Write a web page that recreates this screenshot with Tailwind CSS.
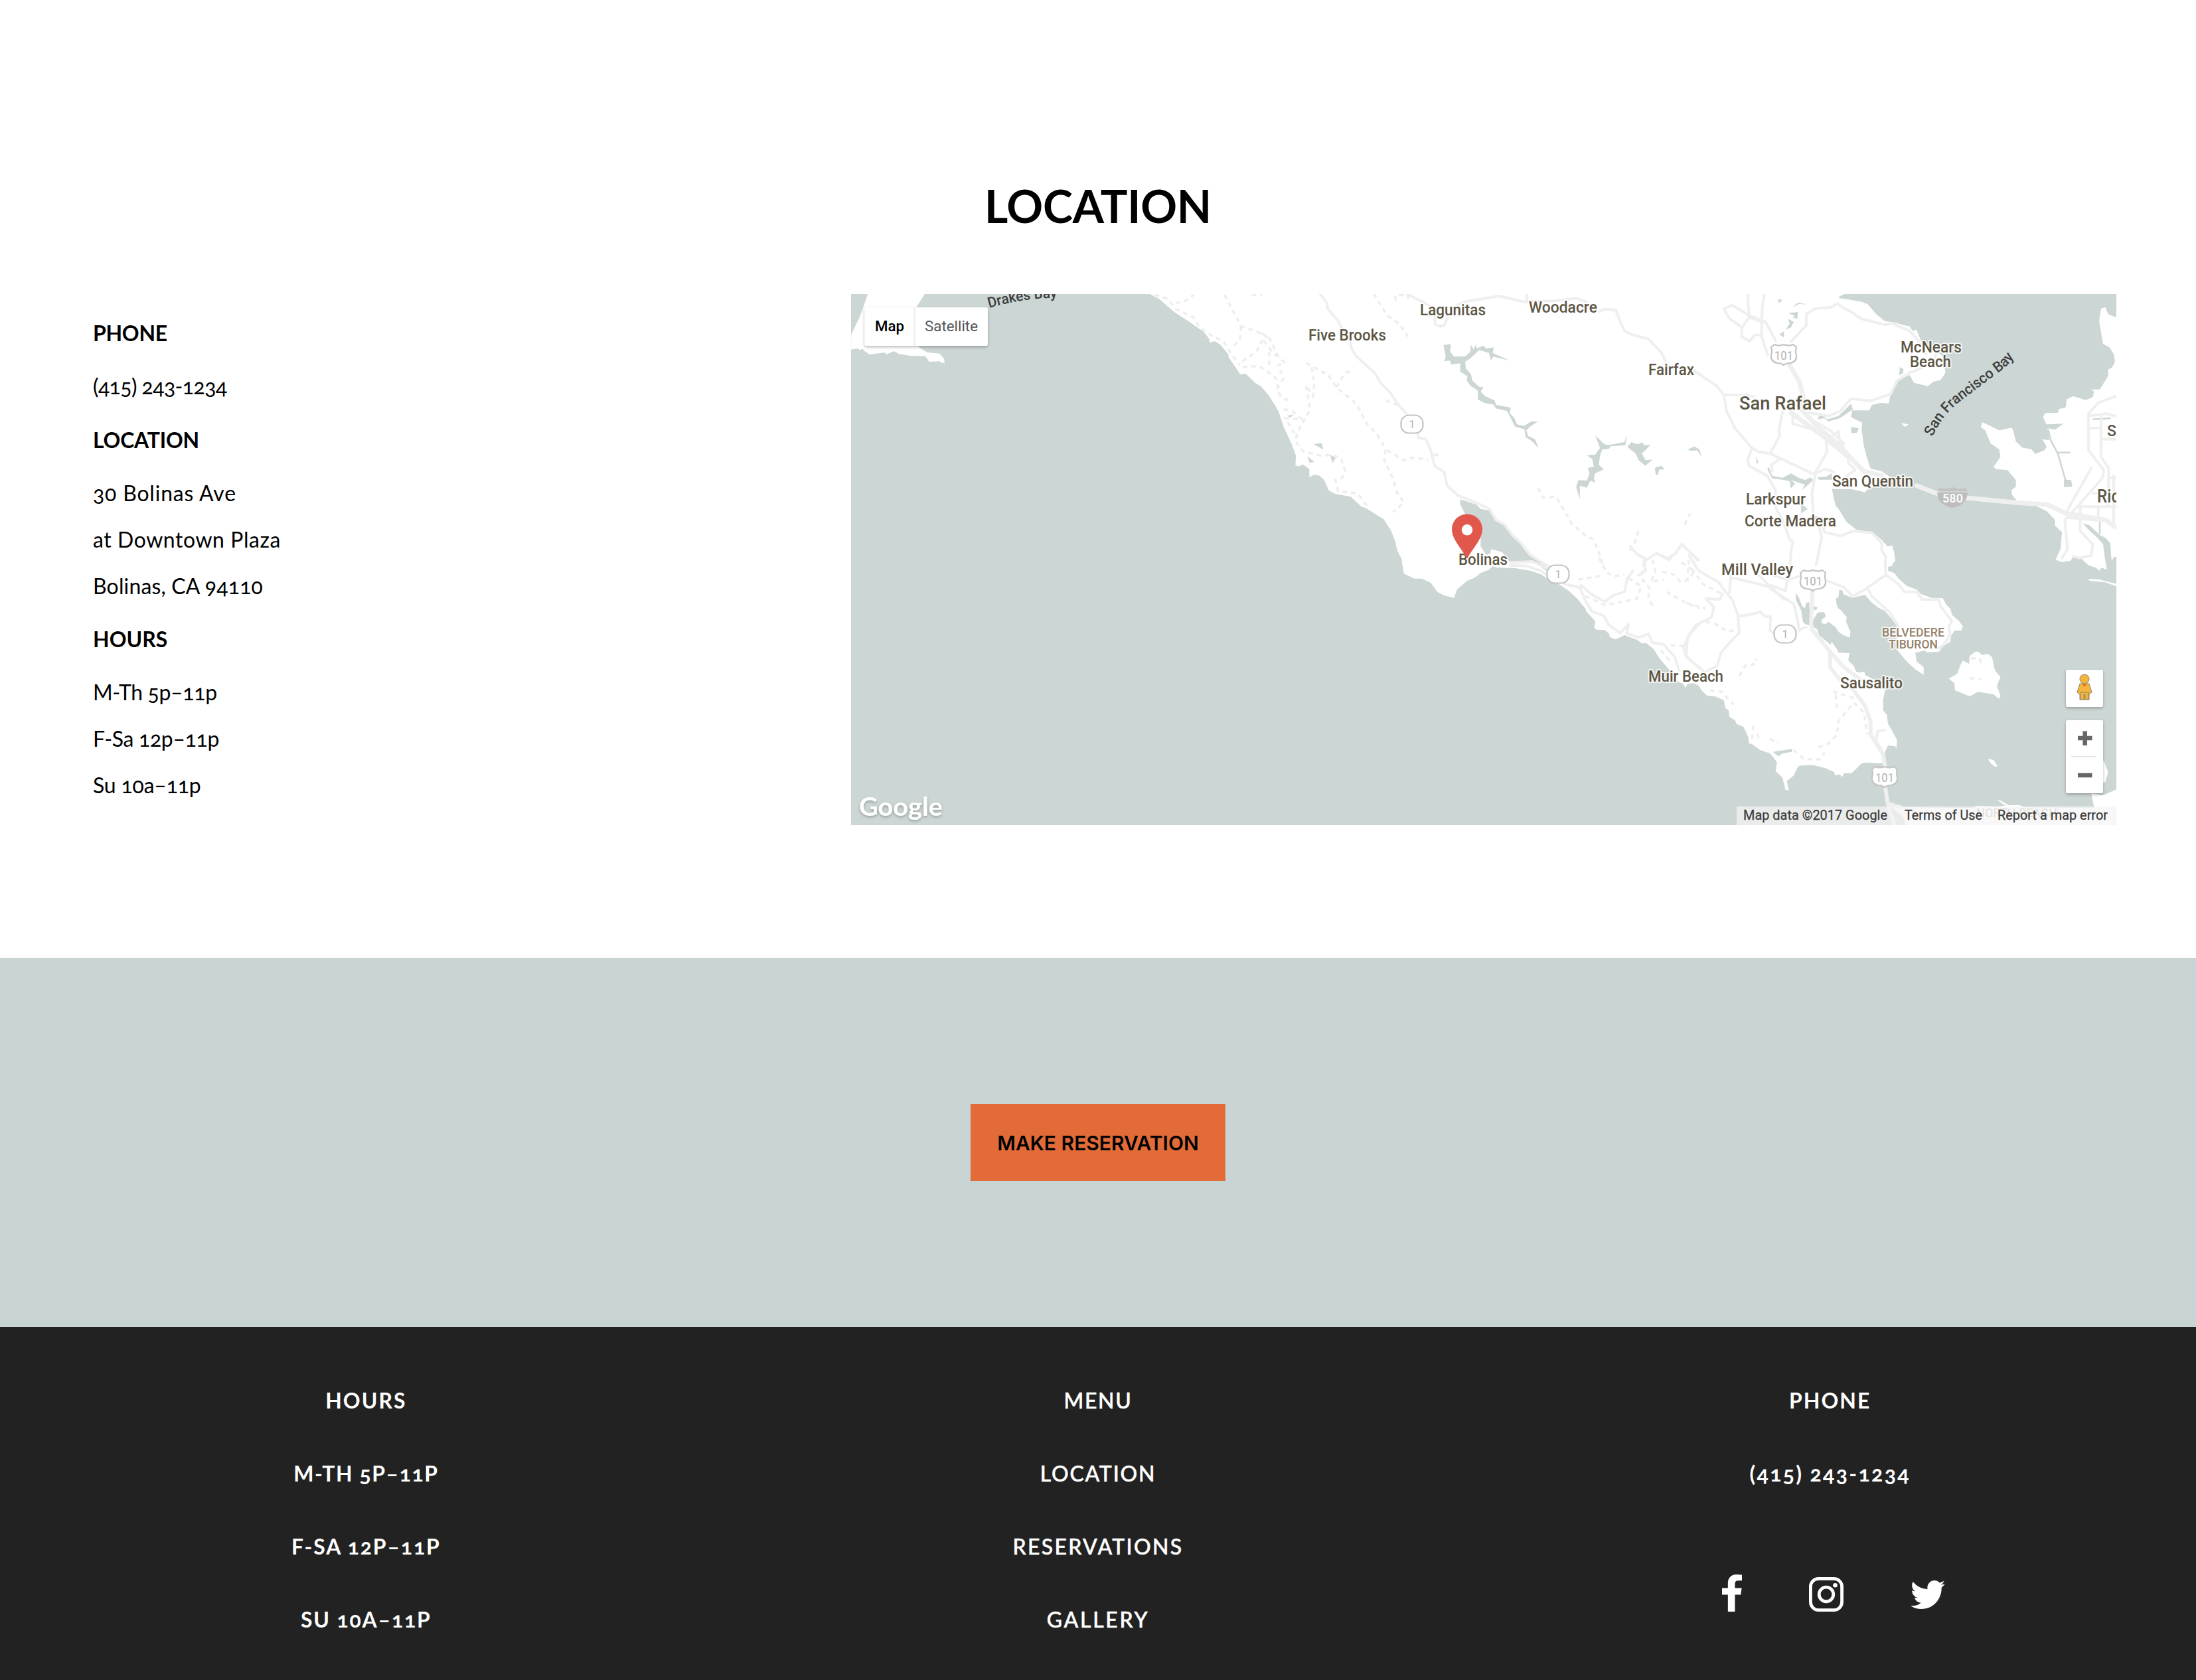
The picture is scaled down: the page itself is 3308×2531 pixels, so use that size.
<!DOCTYPE html>
<html lang="en">
<head>
<meta charset="utf-8">
<title>Location</title>
<script src="https://cdn.jsdelivr.net/npm/@tailwindcss/browser@4"></script>
</head>
<body class="w-[3308px] h-[2531px] overflow-hidden bg-white text-black font-['Lato',sans-serif]">
<main>
  <section class="h-[1443px] pt-[270px]">
    <h2 class="text-center text-[68px] leading-[80px] font-bold tracking-[-0.3px]">LOCATION</h2>
    <div class="mt-[93px] flex h-[800px] pl-[140px] pr-[120px]">
      <div class="w-[1142px] shrink-0 pt-[24px] text-[32px] leading-[70px] [font-feature-settings:'onum']">
        <p class="font-bold mb-[10px] tracking-[-0.3px]">PHONE</p>
        <p class="mb-[10.500px] tracking-[-0.6px]">(415) 243-1234</p>
        <p class="font-bold mb-[10px] tracking-[-0.25px]">LOCATION</p>
        <p class="mb-[10.500px]"><span class="tracking-[0.8px]">30 Bolinas Ave</span><br><span class="tracking-[0.55px]">at Downtown Plaza</span><br><span class="tracking-[0.15px]">Bolinas, CA 94110</span></p>
        <p class="font-bold mb-[10px]">HOURS</p>
        <p class="tracking-[-0.35px]">M-Th 5p–11p<br>F-Sa 12p–11p<br><span class="tracking-[-0.2px]">Su 10a–11p</span></p>
      </div>
      <svg class="block shrink-0 w-[1906px] h-[800px] overflow-hidden" viewBox="0 0 1906 800" fill="none" font-family="Roboto, sans-serif">
        <defs>
          <g id="us">
            <path d="M-19-11 L-14-15 Q-8-12 0-15 Q8-12 14-15 L19-11 Q17-5 19 1 Q20 11 10 13 Q4 13 0 16 Q-4 13-10 13 Q-20 11-19 1 Q-17-5-19-11Z" fill="#fff" stroke="#c4c4c4" stroke-width="2.2"/>
            <text x="-14" y="8" font-size="19" fill="#b2b2b2" textLength="28" lengthAdjust="spacingAndGlyphs">101</text>
          </g>
          <g id="ca">
            <rect x="-16.500" y="-13.500" width="33" height="27" rx="12" fill="#fff" stroke="#c4c4c4" stroke-width="2.200"/>
            <text x="0" y="6" font-size="17" fill="#b2b2b2" text-anchor="middle">1</text>
          </g>
          <filter id="sh" x="-20%" y="-20%" width="140%" height="150%"><feDropShadow dx="0" dy="2" stdDeviation="2" flood-opacity="0.28"/></filter>
        </defs>
        <rect width="1906" height="800" fill="#ccd6d4"/>

        <!-- Land -->
        <g fill="#fff">
          <g transform="translate(-12 -13) scale(.4209 .33333)">
            <path d="M91 30 76 85 60 140 29 222 29 290 50 285 62 292 68 286 80 300 95 312 150 303 155 312 182 297 200 310 240 318 295 320 308 345 345 343 352 350 364 350 360 328 345 308 300 302 270 278 262 100 296 30Z"/>
            <path d="M1085 30 1130 60 1185 120 1240 165 1290 210 1310 240 1312 258 1330 252 1350 268 1378 310 1380 325 1422 403 1440 398 1475 440 1498 458 1525 500 1560 570 1590 600 1590 30Z"/>
          </g>
          <path transform="translate(618 -13) scale(.4209 .33333)" d="M-5 30V450L0 458 25 490 62 570 80 640 108 715 124 770 122 812 133 818 150 810 172 830 172 866 190 855 208 860 225 880 242 928 265 942 320 955 358 1000 375 1007 438 1057 465 1110 480 1160 487 1200 502 1235 505 1270 1600 1270V30Z"/>
          <path transform="translate(618 397) scale(.4209 .33333)" d="M502 -10 510 72 548 95 575 95 607 115 630 155 655 172 690 182 700 145 737 105 765 90 785 70 815 55 828 38 840 45 905 47 965 60 1000 75 1025 95 1065 120 1100 150 1130 185 1160 230 1163 243 1175 260 1195 287 1192 318 1200 326 1230 328 1245 345 1247 360 1268 370 1300 350 1345 372 1362 388 1378 387 1405 415 1425 455 1445 485 1465 515 1490 560 1512 572 1518 590 1525 570 1545 565 1560 575 1580 590V-10Z"/>
          <path transform="translate(1258 397) scale(.4209 .33333)" d="M-10 -10V575L0 572 20 568 42 572 55 600 75 625 105 628 135 645 140 680 152 690 155 720 175 735 180 752 205 765 222 810 225 840 235 842 265 870 300 885 325 925 320 965 345 995 355 1050 368 1052 360 1010 385 985 400 945 410 940 455 938 495 950 530 970 532 985 550 980 558 992 565 975 592 975 628 930 640 927 700 930 712 935 708 890 722 850 748 852 752 865 755 825 738 785 722 750 718 710 705 690 705 640 712 600 700 570 640 530 638 515 620 520 608 515 600 490 580 465 585 432 545 430 538 410 520 380 518 395 475 350 470 325 450 310 425 300 418 290 412 240 392 190 392 160 403 180 415 220 425 228 430 205 440 200 442 240 452 290 460 270 470 250 490 245 498 255 498 270 485 280 485 298 500 300 510 290 535 315 545 335 562 350 585 362 588 335 572 290 575 270 555 240 540 220 535 185 545 180 548 145 560 150 562 165 595 182 640 168 665 205 690 228 710 240 735 275 760 320 750 410 760 425 790 470 820 505 850 530 850 495 825 470 820 430 855 420 860 428 905 425 920 400 945 380 948 355 960 330 985 330 990 310 975 285 952 260 945 230 932 215 918 183 880 182 840 165 825 145 790 128 760 95 745 70 723 60 722 45 748 15 745 -10Z"/>
          <g transform="translate(1258 -13) scale(.4209 .33333)">
            <path d="M-10 30V1270H735L748 1240 745 1210 738 1175 720 1180 700 1150 665 1115 610 1105 575 1070 545 1010 535 995 528 960 522 920 590 920 640 935 650 920 730 885 740 875 700 840 660 828 645 770 635 720 628 650 630 620 590 595 595 565 655 565 665 540 700 530 725 535 730 500 745 450 760 425 800 405 815 440 865 455 885 435 910 428 928 395 925 365 925 330 890 290 845 260 830 220 825 200 810 205 800 185 775 178 740 165 712 162 680 130 650 85 630 75 590 65 550 58 545 52 568 38 568 30Z"/>
            <path d="M1600 148 1539 145 1510 130 1500 98 1485 105 1478 160 1492 265 1515 280 1530 310 1535 345 1525 370 1510 380 1510 410 1480 470 1450 470 1460 480 1455 505 1430 518 1385 500 1362 515 1358 552 1335 558 1330 575 1285 577 1277 595 1290 630 1300 700 1275 695 1290 730 1282 745 1250 762 1235 740 1210 735 1180 705 1170 655 1165 643 1120 655 1060 618 1054 640 1070 655 1090 715 1120 740 1125 775 1100 820 1110 830 1150 835 1180 880 1180 910 1165 925 1165 945 1185 975 1250 995 1290 1020 1320 1060 1320 1085 1345 1115 1340 1190 1322 1240 1345 1250 1375 1245 1385 1228 1410 1230 1440 1265 1465 1275 1480 1290 1485 1275 1505 1285 1500 1235 1528 1238 1528 1228 1600 1228Z"/>
            <path d="M768 622 797 628 783 640Z"/>
          </g>
          <g transform="translate(1258 397) scale(.4209 .33333)">
            <path d="M1045 425 1035 425 1015 445 1012 480 990 465 980 490 970 525 940 548 960 568 962 600 1015 627 1045 607 1100 618 1120 638 1125 625 1112 580 1125 540 1105 510 1095 450 1080 435 1060 440Z"/>
            <path d="M1080 908 1100 915 1115 943 1105 945 1090 930ZM1480 900 1495 920 1510 970 1500 1015 1480 1020ZM1437 97 1475 98 1545 120V132L1500 112 1445 105ZM720 1110 755 1128 1030 1132 1040 1122 1110 1125 1150 1120 1190 1118 1220 1130 1539 1130V1220H790L775 1170ZM1450 1065 1490 1075 1500 1070 1545 1045V1130H1460ZM1112 1095 1125 1098 1155 1120 1140 1120Z"/>
          </g>
        </g>

        <!-- Lagoons, lakes and creeks -->
        <g fill="#ccd6d4">
          <g transform="translate(618 -13) scale(.4209 .33333)">
            <path d="M712 967 745 980 770 990 785 1010 818 1018 835 1060 868 1082 895 1130 925 1165 960 1215 1010 1250 1050 1288 1020 1290 985 1258 955 1245 890 1250 870 1218 862 1205 822 1192 820 1212 805 1218 785 1180 785 1120 730 1035 712 990Z"/>
            <path d="M652 270 678 265 676 300 690 322 730 320 748 300 750 268 760 290 768 265 770 285 795 272 805 285 832 280 828 305 890 340 830 322 822 340 815 305 780 292 750 328 730 345 732 375 750 400 755 430 780 458 795 460 785 480 800 500 835 520 840 540 892 552 890 580 905 598 915 628 940 635 965 615 990 615 965 635 948 655 955 680 980 695 993 738 970 705 945 685 942 650 908 638 880 568 840 556 830 538 800 532 775 515 775 475 750 455 735 430 738 410 712 390 712 352 680 358 675 340 655 343 660 320Z"/>
            <path d="M1195 678 1225 715 1240 722 1300 708 1308 672 1303 722 1250 727 1245 738 1220 742 1212 770 1208 810 1225 832 1195 850 1190 870 1195 893 1178 882 1165 914 1140 905 1140 965 1127 910 1135 880 1165 882 1175 850 1168 825 1190 820 1185 785 1165 768 1195 765 1212 735ZM1325 708 1345 718 1365 710 1370 722 1392 720 1375 745 1362 760 1375 790 1400 787 1375 815 1350 790 1340 760 1310 730ZM1408 825 1432 815 1443 832 1425 832 1418 858 1412 855ZM1525 742 1550 728 1568 740 1576 775 1560 745 1540 748ZM188 718 215 712 222 742ZM165 772 190 798 172 802ZM246 765 266 780 255 802ZM92 590 115 582 105 598Z"/>
          </g>
          <g transform="translate(1258 -13) scale(.4209 .33333)">
            <path d="M765 368 778 380 775 398 762 405ZM590 640 617 645 612 665 592 668ZM328 62 345 65 332 80ZM380 98 400 78 435 86 405 84ZM365 125 400 120 398 150 380 145 390 138ZM365 150 385 165 375 190 355 200 370 175ZM333 222 350 208 350 235ZM480 580 505 605 545 590 590 535 597 560 550 600 508 615 495 600 470 605ZM295 820 308 860 345 870 375 850 400 868 425 880 445 868 455 880 415 925 425 900 375 880 390 895 375 918 370 885 345 878 308 872 290 830ZM470 868 500 865 520 850 525 878 475 878ZM250 770 258 800 252 808ZM1290 628 1350 625 1320 652 1290 645ZM1352 878 1378 880 1382 910 1352 912ZM1180 705 1205 735 1215 728 1195 715ZM410 985 435 1010 412 1030ZM450 1040 490 1048 460 1060Z"/>
            <path d="M1420 1075 1445 1085 1480 1128 1500 1140 1518 1165 1522 1245 1500 1245 1492 1170 1470 1138 1440 1105Z"/>
          </g>
          <path transform="translate(1258 397) scale(.4209 .33333)" d="M310 878 380 865 378 878 345 885 330 898ZM458 220 470 225 465 238 456 235ZM540 205 556 205 562 230 545 232Z"/>
        </g>
        <g stroke="#ccd6d4" stroke-width="2.500">
          <path transform="translate(1258 -13) scale(.4209 .33333)" vector-effect="non-scaling-stroke" d="M1295 650 1305 700 1330 760 1360 890M1325 755H1375M1455 605 1520 600M1480 1065V1125"/>
        </g>

        <!-- Roads -->
        <g stroke="#efefef" stroke-width="4" stroke-linejoin="round" stroke-linecap="round">
          <g transform="translate(618 -13) scale(.4209 .33333)">
            <path vector-effect="non-scaling-stroke" d="M210 38 235 80 237 105 275 160 290 200 310 230 325 290 340 320 405 395 430 445 465 490 490 540 520 580M560 665 562 688 588 695 605 740 620 815 655 845 665 905 705 950 775 985 818 1012 840 1060 870 1080 900 1130 930 1165 960 1215 1020 1265 1060 1290"/>
            <path vector-effect="non-scaling-stroke" d="M520 38 580 75 600 92M700 88 735 72 850 48 920 68 950 76V42M950 72 1050 70 1130 58 1165 76M1210 118 1225 107 1268 110 1285 165 1300 205 1325 222 1385 242 1430 300 1450 350M1550 385 1580 410M620 135 622 175 640 186 655 180 665 150M1505 1170 1480 1215 1450 1235 1415 1210 1380 1240 1345 1215 1320 1180M1505 1170 1530 1200 1560 1240M610 770 630 765"/>
          </g>
          <g transform="translate(618 397) scale(.4209 .33333)">
            <path vector-effect="non-scaling-stroke" d="M890 35 950 38 1000 60 1025 80M890 22 970 18 1025 50M1085 120 1140 135 1160 195 1185 245 1225 262 1245 305 1285 342 1315 302 1308 342 1350 362 1385 345 1400 385 1440 392 1480 450 1495 510M1568 300 1535 345 1510 405 1520 445 1568 500M1145 125 1180 165 1230 200 1260 170 1300 155 1310 95 1330 60M1350 80 1375 60 1370 0M1470 -10 1460 10 1435 -10"/>
          </g>
          <g transform="translate(1258 -13) scale(.4209 .33333)">
            <path vector-effect="non-scaling-stroke" d="M220 38 225 145 285 170M135 105 165 90 225 135 285 165 320 250M135 105 155 150 200 190 225 145M200 190 198 232 228 252 245 225 270 222M280 38 272 100 270 230 292 315M375 255 430 180 430 130 460 105 520 98 542 82 560 100 585 115 625 150 712 178 740 172 770 190 800 205 828 245 850 275 858 310M858 365 800 395 755 430 732 490 660 522 590 512 550 570 510 590 440 575M30 388 110 455 135 495 205 495 240 502M135 495 145 570 175 645 235 735 260 752 300 760 455 852 500 830 530 845M345 570 332 655 335 680 300 760M235 735 220 790 225 815 290 860 320 925 322 1010 345 1060 360 1110 370 1150 382 1160 375 1205 372 1262M380 565 382 625 450 650 500 690 505 750 465 840 450 935 455 1040M470 1060 485 1140 465 1262M490 1090 495 1115 550 1132 600 1110 665 1118 700 1165 700 1200 715 1225 712 1262M330 790 305 810 308 840M500 700 545 660 550 720 515 715M545 690 580 780 580 800 605 835 570 865M430 590 520 660 565 715M0 1190 45 1240M900 290 890 330"/>
            <path vector-effect="non-scaling-stroke" stroke-width="7" d="M370 360 405 435 420 510 415 560M375 575 500 690 580 775M415 565 480 650 545 720 635 840 700 860M825 905 900 942M1005 960 1180 982 1290 990 1360 1030 1500 1060 1535 1090"/>
            <path vector-effect="non-scaling-stroke" d="M1560 490 1475 530 1440 580 1440 745 1495 835 1490 870 1400 1000 1355 1060 1365 1190 1345 1232M1485 590V775L1512 825V1000M1440 645H1485M1485 695H1539M1440 590 1505 580 1539 592M1450 825 1360 1025M1410 1000V1110L1455 1170 1450 1220 1410 1232 1385 1225M1410 1000H1539M1370 1050 1500 1065 1535 1095M1455 940H1500M1512 870H1539M1475 1005V1060M1530 860V1070"/>
          </g>
          <g transform="translate(1258 397) scale(.4209 .33333)">
            <path vector-effect="non-scaling-stroke" d="M10 -10 45 60 115 110 150 170 165 190 185 260 190 340 155 385 125 430 110 490 70 515M70 185 100 225 90 270 35 305 5 360 0 450 60 510M70 185 120 190 130 165M190 265 240 255 265 245 280 265 302 268 300 330 318 345M160 85 155 160M160 90 230 110 290 130 385 210 400 290 405 330M260 80 300 130 350 190M300 125 355 150 362 100M310 80 362 100 405 85M405 325 430 315M505 105 565 135 595 175 645 140 715 78 712 10M715 78 760 120 780 155 825 155 845 190 905 190 910 220 950 285 940 315 945 345 925 390 905 410M650 140 665 175 730 250 760 310M710 780 685 785 680 830 700 870"/>
            <path vector-effect="non-scaling-stroke" stroke-width="6" d="M452 148 447 300 450 325 515 425 560 490 600 530 630 555M515 425 515 495 545 545 600 600 640 670 660 740 660 800 705 890 712 945M712 1035 722 1115 745 1210M730 1115 770 1130"/>
          </g>
        </g>

        <!-- Trails -->
        <g stroke="#eeeeee" stroke-width="3.500" stroke-dasharray="7 6">
          <g transform="translate(-12 -13) scale(.4209 .33333)">
            <path vector-effect="non-scaling-stroke" d="M1365 42 1425 185 1475 205 1520 235M1425 185 1420 250 1390 280M1115 42 1160 60 1190 105 1255 145 1275 190 1330 235 1360 250 1395 320 1420 360M1190 80 1225 70 1255 42M1500 245 1480 300 1425 345M1430 368 1490 365 1520 390 1550 420 1560 490M1505 250 1545 315 1568 320M1525 300 1525 360M1462 42H1500"/>
          </g>
          <g transform="translate(618 -13) scale(.4209 .33333)">
            <path vector-effect="non-scaling-stroke" d="M402 38 450 135 495 175 525 232M480 68 480 45 525 42 525 65M0 215 30 240 60 320 85 350 60 360 80 420 55 470 75 510 105 520M160 350 240 405 268 460 340 535 380 630 410 665 445 740 440 790 470 870 485 935 510 980 472 1025M180 370 190 440 185 500 160 450 175 560 135 650 120 700 150 750 215 770 250 765 285 780 300 840 290 870 265 880 275 930 345 940 380 1000M268 460 300 395 332 385M450 745 510 790 540 778 598 788M80 560 110 565 145 605 85 600 130 690M445 520 485 540M990 915 1010 960 1055 955 1110 1075 1160 1130 1190 1150 1210 1215 1222 1262M1350 1110 1335 1170 1310 1215M1515 1080 1535 1030"/>
          </g>
          <g transform="translate(618 397) scale(.4209 .33333)">
            <path vector-effect="non-scaling-stroke" d="M1208 0 1235 65 1260 85 1300 78M1135 100 1225 80M1160 175 1230 215 1310 195 1345 185 1360 130 1310 90M1370 20 1360 90 1390 140 1385 180 1400 218M1400 10 1410 60 1395 110 1440 100M1435 65 1475 75 1500 110 1530 100 1550 60 1500 20M1450 155 1520 205 1568 230M1465 395 1510 400M1430 420 1470 480M1530 10 1525 100"/>
          </g>
          <g transform="translate(1258 397) scale(.4209 .33333)">
            <path vector-effect="non-scaling-stroke" d="M0 205 70 230M20 50 60 120 130 165M70 290 105 300 150 335 185 325M190 535 210 490 250 480 250 455M85 600 125 605 170 665M240 760 235 835M255 795 260 820M300 820 330 840M525 605 600 635M535 620 540 690M600 655 635 700 650 800M590 670 545 740 540 800 510 840 470 860M385 870 420 910 480 912 495 880M1020 455 1050 455 1060 495M1015 545 1055 550"/>
          </g>
        </g>

        <!-- Route shields -->
        <use href="#ca" x="845" y="196"/><use href="#ca" x="1065" y="422"/><use href="#ca" x="1407" y="512"/>
        <use href="#us" x="1405" y="91"/><use href="#us" x="1449" y="431"/><use href="#us" x="1557" y="727"/>
        <g transform="translate(1659 306)">
          <path d="M-20-14Q-10-11 0-15 10-11 20-14L22-9H-22Z" fill="#c2c2c2"/>
          <path d="M-23-7H23Q22 12 0 16-22 12-23-7Z" fill="#bdbdbd"/>
          <text x="-15" y="8" font-size="18" fill="#fff" textLength="31" lengthAdjust="spacingAndGlyphs" font-weight="500">580</text>
        </g>

        <!-- Place labels -->
        <g fill="#5d5645" font-size="23" font-weight="500" stroke="#fff" stroke-opacity="0.75" stroke-width="4" stroke-linejoin="round" paint-order="stroke">
          <text x="857" y="32" textLength="99" lengthAdjust="spacingAndGlyphs">Lagunitas</text>
          <text x="1021" y="28" textLength="103" lengthAdjust="spacingAndGlyphs">Woodacre</text>
          <text x="689" y="70" textLength="117" lengthAdjust="spacingAndGlyphs">Five Brooks</text>
          <text x="1201" y="122" textLength="69" lengthAdjust="spacingAndGlyphs">Fairfax</text>
          <text x="915" y="408" textLength="74" lengthAdjust="spacingAndGlyphs">Bolinas</text>
          <text x="1581" y="88" textLength="92" lengthAdjust="spacingAndGlyphs">McNears</text>
          <text x="1595" y="110" textLength="62" lengthAdjust="spacingAndGlyphs">Beach</text>
          <text x="1338" y="174" font-size="28" textLength="131" lengthAdjust="spacingAndGlyphs">San Rafael</text>
          <text x="1478" y="290" textLength="122" lengthAdjust="spacingAndGlyphs">San Quentin</text>
          <text x="1348" y="317" textLength="90" lengthAdjust="spacingAndGlyphs">Larkspur</text>
          <text x="1346" y="350" textLength="138" lengthAdjust="spacingAndGlyphs">Corte Madera</text>
          <text x="1311" y="423" textLength="108" lengthAdjust="spacingAndGlyphs">Mill Valley</text>
          <text x="1201" y="584" textLength="113" lengthAdjust="spacingAndGlyphs">Muir Beach</text>
          <text x="1490" y="594" textLength="94" lengthAdjust="spacingAndGlyphs">Sausalito</text>
          <text x="1892" y="214">S</text>
          <text x="1877" y="314" font-size="28" textLength="34" lengthAdjust="spacingAndGlyphs">Ric</text>
          <g fill="#958269" font-size="17.500">
            <text x="1553" y="516" textLength="94" lengthAdjust="spacingAndGlyphs">BELVEDERE</text>
            <text x="1563" y="534" textLength="74" lengthAdjust="spacingAndGlyphs">TIBURON</text>
            <text x="1695" y="788" textLength="122" lengthAdjust="spacingAndGlyphs" font-weight="400" fill-opacity="0.7">NORTH BEACH</text>
          </g>
        </g>
        <path id="bay" d="M1629 215Q1642 186 1666 165L1734 114Q1747 104 1759 84"/>
        <path id="drakes" d="M208 21Q258 6 320 5"/>
        <g fill="#3e3e40" font-size="22" font-weight="500">
          <text><textPath href="#bay" textLength="174" lengthAdjust="spacingAndGlyphs">San Francisco Bay</textPath></text>
          <text><textPath href="#drakes" textLength="104" lengthAdjust="spacingAndGlyphs">Drakes Bay</textPath></text>
        </g>

        <!-- Marker -->
        <path d="M928 399C920 383 905 370 905 354A23 22.500 0 0 1 951 354C951 370 936 383 928 399Z" fill="#e2574c"/>
        <circle cx="928" cy="355.300" r="8.300" fill="#fff"/>

        <!-- Map type switch -->
        <rect x="20.500" y="20" width="185.500" height="58" rx="3" fill="#fff" filter="url(#sh)"/>
        <path d="M95.500 20V78" stroke="#ececec" stroke-width="2"/>
        <g font-size="22">
          <text x="36" y="56" fill="#000" font-weight="500" textLength="44" lengthAdjust="spacingAndGlyphs">Map</text>
          <text x="111" y="56" fill="#565656" textLength="80" lengthAdjust="spacingAndGlyphs">Satellite</text>
        </g>

        <!-- Street view and zoom -->
        <rect x="1830" y="566" width="56" height="56" rx="3" fill="#fff" filter="url(#sh)"/>
        <g fill="#f3b53b" stroke="#8d8371" stroke-width="1">
          <path d="M1851 587H1865L1869 600 1865 603V611H1851V603L1847 600Z"/>
          <path d="M1852 600V611H1857V603H1859V611H1864V600Z"/>
          <circle cx="1858" cy="580" r="7"/>
        </g>
        <path d="M1854 587H1862L1858 592Z" fill="#dd7a28"/>
        <rect x="1830" y="642" width="56" height="110" rx="3" fill="#fff" filter="url(#sh)"/>
        <path d="M1838 697H1876" stroke="#e6e6e6" stroke-width="2"/>
        <path d="M1848 669H1869.500M1858.750 658.500V680M1848 725H1869.500" stroke="#666" stroke-width="6.500"/>

        <!-- Attribution -->
        <rect x="1334" y="772" width="572" height="28" fill="#f5f5f5" fill-opacity="0.7"/>
        <g font-size="20.500" fill="#3c3c3c" stroke="#3c3c3c" stroke-width="0.3">
          <text x="1344" y="792" textLength="217" lengthAdjust="spacingAndGlyphs">Map data ©2017 Google</text>
          <text x="1587" y="792" textLength="117" lengthAdjust="spacingAndGlyphs">Terms of Use</text>
          <text x="1727" y="792" textLength="166" lengthAdjust="spacingAndGlyphs">Report a map error</text>
        </g>
        <text x="12" y="786" font-family="Lato, sans-serif" font-size="39" font-weight="700" fill="#fff" textLength="126" lengthAdjust="spacingAndGlyphs" filter="url(#sh)">Google</text>
      </svg>
    </div>
  </section>

  <section class="flex h-[556px] items-center justify-center bg-[#c8d5d4]">
    <a class="flex h-[116px] w-[384px] items-center justify-center bg-[#e26b38] pt-[3px] font-['Inter',sans-serif] text-[30px] font-semibold whitespace-nowrap">MAKE RESERVATION</a>
  </section>
</main>

<footer class="grid h-[532px] grid-cols-3 bg-[#222] pt-[56px] text-center text-[32px] leading-[110px] text-white [font-feature-settings:'onum']">
  <div class="font-bold">
    <p class="tracking-[2px]">HOURS</p>
    <p class="tracking-[1.5px]">M-TH 5P–11P</p>
    <p class="tracking-[1.8px]">F-SA 12P–11P</p>
    <p class="tracking-[1.8px]">SU 10A–11P</p>
  </div>
  <nav class="font-medium [-webkit-text-stroke:0.5px_#fff]">
    <p class="tracking-[1.6px]">MENU</p>
    <p class="tracking-[1.8px]">LOCATION</p>
    <p class="tracking-[2.3px]">RESERVATIONS</p>
    <p class="tracking-[2.7px]">GALLERY</p>
  </nav>
  <div class="font-bold">
    <p class="tracking-[2px]">PHONE</p>
    <p class="tracking-[2.3px]">(415) 243-1234</p>
    <div class="mt-[97px] flex items-end justify-center gap-[101px] pl-[11px]">
      <svg class="block h-[56px] w-[30px]" viewBox="479 0 864 1664" preserveAspectRatio="none" fill="#fff"><path d="M1343 12v264h-157q-86 0-116 36t-30 108v189h293l-39 296h-254v759h-306v-759h-255v-296h255v-218q0-186 104-288.500t277-102.500q147 0 228 12z"/></svg>
      <svg class="block h-[52px] w-[52px]" viewBox="0 0 52 52" fill="none" stroke="#fff" stroke-width="4.800"><rect x="2.400" y="2.400" width="47.200" height="47.200" rx="12"/><circle cx="26" cy="26" r="10.800"/><circle cx="39.500" cy="12.300" r="3.300" fill="#fff" stroke="none"/></svg>
      <svg class="mb-[4px] block h-[43px] w-[52px]" viewBox="108 256 1576 1280" preserveAspectRatio="none" fill="#fff"><path d="M1684 408q-67 98-162 167 1 14 1 42 0 130-38 259.500t-115.500 248.500-184.500 210.500-258 146-323 54.500q-271 0-496-145 35 4 78 4 225 0 401-138-105-2-188-64.500t-114-159.500q33 5 61 5 43 0 85-11-112-23-185.500-111.500t-73.500-205.500v-4q68 38 146 41-66-44-105-115t-39-154q0-88 44-163 121 149 294.500 238.500t371.500 99.500q-8-38-8-74 0-134 94.500-228.500t228.500-94.500q140 0 236 102 109-21 205-78-37 115-142 178 93-10 186-50z"/></svg>
    </div>
  </div>
</footer>
</body>
</html>
